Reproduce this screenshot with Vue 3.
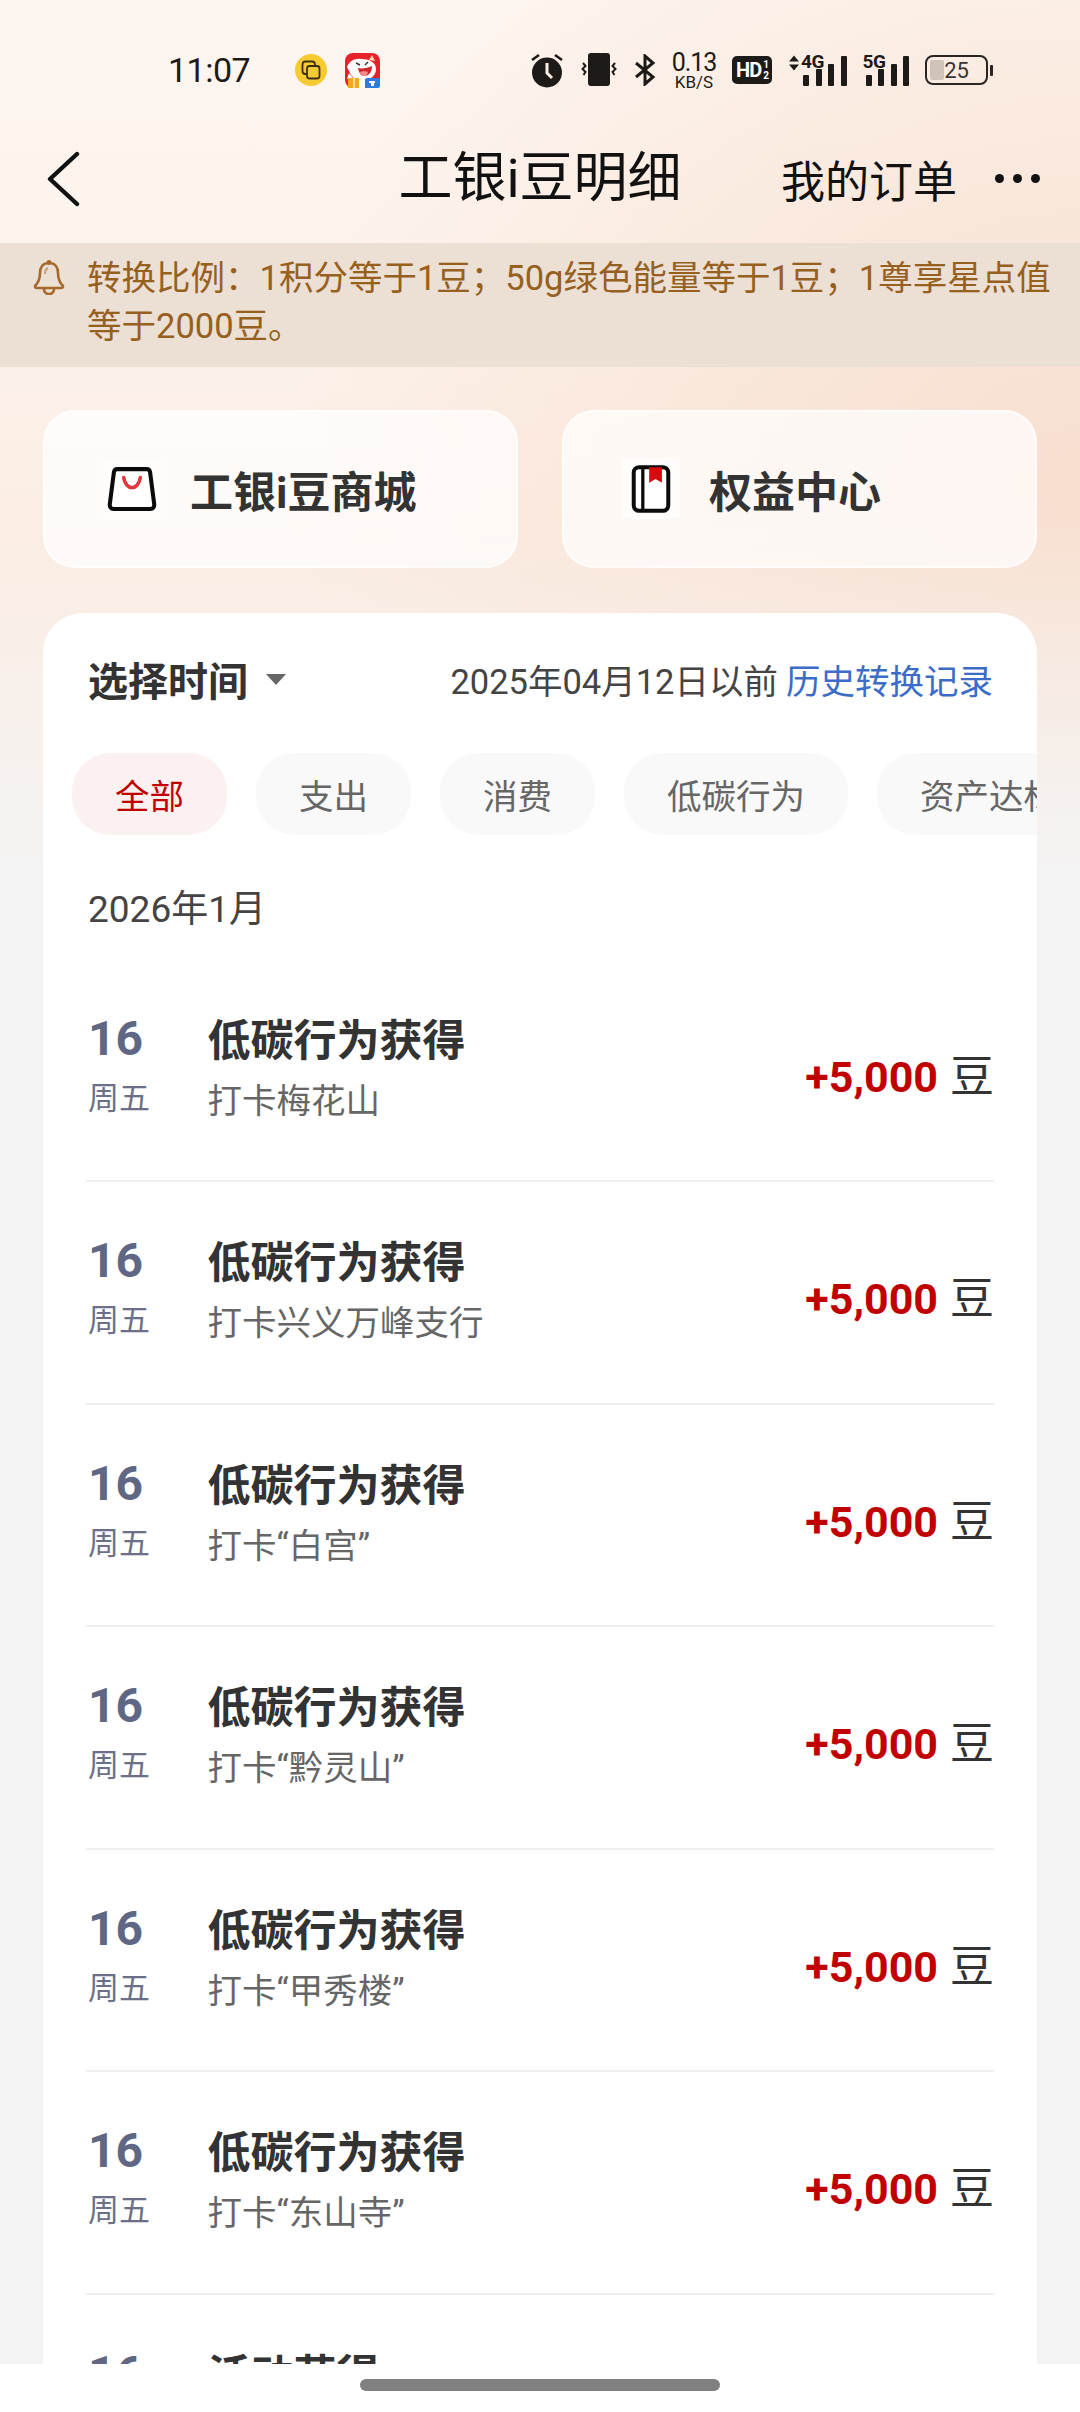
<template>
  <div class="page">
    <div class="status">
      <span class="time">11:07</span>
      <div class="app-icons">
        <svg width="32" height="32" viewBox="0 0 32 32">
          <circle cx="16" cy="16" r="16" fill="#f6cb32" />
          <rect x="7.500" y="7.500" width="12.500" height="12.500" rx="3" fill="none" stroke="#3a3115" stroke-width="1.800" />
          <rect x="12" y="12" width="12.500" height="12.500" rx="2.500" fill="#f6cb32" stroke="#3a3115" stroke-width="1.800" />
        </svg>
        <svg width="35" height="35" viewBox="0 0 35 35">
          <rect width="35" height="35" rx="8" fill="#e8202a" />
          <path d="M2 14c2-6 8-9 14-8 8 0 15 3 15 10 0 7-6 11-13 11-5 0-9-1-12-5L2 14z" fill="#fff" />
          <path d="M4 20l-2 6 6-1z" fill="#fff" />
          <path d="M27 2l3 6-6-1z" fill="#f4d9b0" />
          <path d="M13 15c4 1 10 0 14-2 0 6-3 10-8 10-3 0-5-3-6-8z" fill="#d5252c" />
          <path d="M15 19c2-1 6-1 8 0-1 3-2 4-4 4s-3-1-4-4z" fill="#f58a8a" />
          <path d="M11 10l4 2M23 9l-3 3" stroke="#333" stroke-width="1.500" />
          <rect x="3" y="25" width="11" height="10" fill="#f5a623" />
          <rect x="8" y="25" width="2" height="10" fill="#ffe08a" />
          <rect x="14" y="27" width="6" height="8" fill="#fff" />
          <rect x="20" y="25" width="15" height="10" rx="2" fill="#2f7be0" />
          <path d="M24 28h6v2h-6zM26 30h3v3h-3z" fill="#fff" />
        </svg>
      </div>
      <div class="sys-icons">
        <svg width="34" height="36" viewBox="0 0 34 36">
          <circle cx="17" cy="20.500" r="15" fill="#1d1a18" />
          <path d="M17 11v10l5 5" fill="none" stroke="#fbeee4" stroke-width="3" />
          <path d="M2 8l7-5M32 8l-7-5" stroke="#1d1a18" stroke-width="2.600" fill="none" />
        </svg>
        <svg width="38" height="34" viewBox="0 0 38 34">
          <rect x="8" y="0" width="22" height="33" rx="3" fill="#1d1a18" />
          <path d="M3 10l2.500 3-3 3 3 3-2 3M35 10l-2.500 3 3 3-3 3 2 3" fill="none" stroke="#1d1a18" stroke-width="2" />
        </svg>
        <svg width="22" height="32" viewBox="0 0 22 32">
          <path d="M2 9l17 14-8 7V2l8 7L2 23" fill="none" stroke="#1d1a18" stroke-width="3" />
        </svg>
        <div class="speed">
          <span class="speed-num">0.13</span>
          <span class="speed-unit">KB/S</span>
        </div>
        <div class="hd">HD<span class="hd-sub"><i>1</i><i>2</i></span></div>
        <div class="net-icon">
          <svg class="updown" width="12" height="16" viewBox="0 0 12 16">
            <path d="M1 6.500l5-6 5 6zM1 9.500l5 6 5-6z" fill="#1d1a18" />
          </svg>
          <span class="net-label">4G</span>
          <span class="bars"><i class="b1"></i><i class="b2"></i><i class="b3"></i><i class="b4"></i></span>
        </div>
        <div class="net-icon">
          <span class="net-label">5G</span>
          <span class="bars"><i class="b1"></i><i class="b2"></i><i class="b3"></i><i class="b4"></i></span>
        </div>
        <div class="battery">
          <div class="battery-body">
            <span class="battery-fill"></span>
            <span class="battery-num">25</span>
          </div>
          <span class="battery-tip"></span>
        </div>
      </div>
    </div>

    <div class="nav">
      <svg class="back" width="34" height="56" viewBox="0 0 34 56">
        <path d="M31 3L4 28l27 25" fill="none" stroke="#111" stroke-width="4.400" stroke-linecap="round" stroke-linejoin="round" />
      </svg>
      <div class="nav-title">工银i豆明细</div>
      <div class="nav-right">
        <span class="orders">我的订单</span>
        <span class="dots"><i></i><i></i><i></i></span>
      </div>
    </div>

    <div class="notice">
      <svg class="bell" width="34" height="36" viewBox="0 0 34 36">
        <path d="M17 4c-6 0-9 4-9 10 0 6-1 9-5 13 0 1 0 2 2 2h24c2 0 2-1 2-2-4-4-5-7-5-13 0-6-3-10-9-10z" fill="none" stroke="#a56a2c" stroke-width="2.600" stroke-linejoin="round" />
        <circle cx="17" cy="3.500" r="2.400" fill="#a56a2c" />
        <path d="M12 30c0 3 2 5 5 5s5-2 5-5" fill="none" stroke="#a56a2c" stroke-width="2.600" />
        <path d="M13 15c0-3 1-5 3-6" fill="none" stroke="#c9a27a" stroke-width="2" />
      </svg>
      <p class="notice-text">转换比例：1积分等于1豆；50g绿色能量等于1豆；1尊享星点值等于2000豆。</p>
    </div>

    <div class="entries">
      <div class="entry">
        <span class="entry-icon">
          <svg width="50" height="47" viewBox="0 0 54 50">
            <path d="M11 3h32c2 0 3 1 3.500 3L51 41c.3 3-1.500 5-4 5H7c-2.500 0-4.300-2-4-5L7.500 6C8 4 9 3 11 3z" fill="#fff" stroke="#0b0b0b" stroke-width="4.400" stroke-linejoin="round" />
            <path d="M18 12c1 7 5 11 9 11s8-4 9-11" fill="none" stroke="#e0383a" stroke-width="3.800" stroke-linecap="round" />
          </svg>
        </span>
        <span class="entry-label">工银i豆商城</span>
      </div>
      <div class="entry">
        <span class="entry-icon">
          <svg width="40" height="50" viewBox="0 0 44 54">
            <rect x="3" y="3" width="38" height="48" rx="6" fill="#fff" stroke="#0b0b0b" stroke-width="4.400" />
            <path d="M13 3v48" stroke="#0b0b0b" stroke-width="3.600" />
            <path d="M20 3h14v17l-7-4-7 4z" fill="#d9090f" />
          </svg>
        </span>
        <span class="entry-label">权益中心</span>
      </div>
    </div>

    <div class="panel">
      <div class="panel-head">
        <div class="picker">
          <span class="picker-label">选择时间</span>
          <span class="caret"></span>
        </div>
        <div class="history">
          <span>2025年04月12日以前</span>
          <span class="history-link">历史转换记录</span>
        </div>
      </div>

      <div class="tabs">
        <span v-for="(tab, i) in tabs" :key="tab" class="tab" :class="{ active: i === 0 }">{{ tab }}</span>
      </div>

      <div class="month">2026年1月</div>

      <div class="rows">
        <div v-for="(row, i) in rows" :key="i" class="row">
          <div class="row-date">
            <div class="row-day">{{ row.day }}</div>
            <div v-if="row.week" class="row-week">{{ row.week }}</div>
          </div>
          <div class="row-main">
            <div class="row-title">{{ row.title }}</div>
            <div v-if="row.sub" class="row-sub">{{ row.sub }}</div>
          </div>
          <div v-if="row.amount" class="row-amount">
            <span class="amount-num">{{ row.amount }}</span>
            <span class="amount-unit">豆</span>
          </div>
        </div>
      </div>
    </div>

    <div class="home-bar">
      <span class="home-pill"></span>
    </div>
  </div>
</template>

<script setup>
const tabs = ['全部', '支出', '消费', '低碳行为', '资产达标']

const places = ['打卡梅花山', '打卡兴义万峰支行', '打卡“白宫”', '打卡“黔灵山”', '打卡“甲秀楼”', '打卡“东山寺”']

const rows = places.map(sub => ({
  day: 16,
  week: '周五',
  title: '低碳行为获得',
  sub,
  amount: '+5,000'
}))

// cut off by the home bar, only the top of it shows
rows.push({ day: 16, title: '活动获得' })
</script>

<style scoped>
.page {
  position: relative;
  width: 1080px;
  height: 2412px;
  overflow: hidden;
  font-family: Roboto, "Noto Sans CJK SC", sans-serif;
  background:
    linear-gradient(180deg, rgba(244, 244, 244, 0) 520px, #f4f4f4 880px),
    radial-gradient(800px 700px at 1080px 480px, #f8dfd0 0%, rgba(248, 223, 208, 0) 100%),
    linear-gradient(180deg, #fdf5ef 0%, #fcf3ec 300px, #fbecE2 560px);
}

.status {
  display: flex;
  align-items: center;
  height: 140px;
  padding-left: 168px;
  box-sizing: border-box;
}

.time {
  width: 127px;
  font-size: 34px;
  letter-spacing: -0.5px;
  color: #1d1a18;
}

.app-icons {
  display: flex;
  align-items: center;
  gap: 18px;
  width: 235px;
}

.sys-icons {
  display: flex;
  align-items: center;
  gap: 16px;
}

.speed {
  display: flex;
  flex-direction: column;
  align-items: center;
  width: 44px;
  color: #1d1a18;
}

.speed-num {
  font-size: 25px;
  line-height: 25px;
  letter-spacing: -1px;
}

.speed-unit {
  font-size: 17px;
  line-height: 15px;
}

.hd {
  display: flex;
  align-items: center;
  justify-content: center;
  width: 40px;
  height: 28px;
  border-radius: 5px;
  background: #1d1a18;
  color: #fff;
  font-size: 20px;
  font-weight: 700;
  letter-spacing: -1px;
}

.hd-sub {
  display: flex;
  flex-direction: column;
  font-size: 10px;
  line-height: 11px;
  margin-left: 2px;
}

.hd-sub i {
  font-style: normal;
}

.net-icon {
  position: relative;
  display: flex;
  align-items: flex-end;
  height: 32px;
}

.updown {
  position: absolute;
  left: 0;
  top: 1px;
}

.net-icon .updown + .net-label {
  left: 13px;
}

.net-icon:has(.updown) {
  padding-left: 12px;
}

.net-label {
  position: absolute;
  left: 0;
  top: -2px;
  font-size: 19px;
  font-weight: 700;
  line-height: 19px;
  letter-spacing: -0.5px;
  color: #1d1a18;
}

.bars {
  display: flex;
  align-items: flex-end;
  gap: 6.500px;
  padding-left: 3px;
}

.bars i {
  width: 6px;
  border-radius: 1px;
  background: #1d1a18;
}

.bars .b1 {
  height: 11px;
}

.bars .b2 {
  height: 17px;
}

.bars .b3 {
  height: 22px;
}

.bars .b4 {
  height: 30px;
}

.battery {
  display: flex;
  align-items: center;
  gap: 2px;
}

.battery-body {
  position: relative;
  display: flex;
  align-items: center;
  justify-content: center;
  width: 63px;
  height: 30px;
  box-sizing: border-box;
  border: 2.500px solid #2a2523;
  border-radius: 8px;
}

.battery-fill {
  position: absolute;
  left: 3px;
  top: 3px;
  bottom: 3px;
  width: 14px;
  border-radius: 2px;
  background: #cfc3ba;
}

.battery-num {
  position: relative;
  font-size: 22px;
  color: #3a3432;
}

.battery-tip {
  width: 3px;
  height: 11px;
  border-radius: 1px;
  background: #2a2523;
}

.nav {
  display: grid;
  grid-template-columns: 1fr auto 1fr;
  align-items: center;
  height: 103px;
  padding: 0 40px 26px;
  box-sizing: border-box;
}

.back {
  display: block;
  margin-left: 6px;
}

.nav-title {
  font-size: 54px;
  color: #111;
  line-height: 70px;
}

.nav-right {
  display: flex;
  align-items: center;
  justify-content: flex-end;
  gap: 38px;
}

.orders {
  font-size: 44px;
  color: #111;
}

.dots {
  display: flex;
  gap: 9px;
}

.dots i {
  width: 9px;
  height: 9px;
  border-radius: 50%;
  background: #111;
}

.notice {
  display: flex;
  align-items: flex-start;
  height: 124px;
  padding: 11px 0 0 32px;
  box-sizing: border-box;
  background: #ecdfd4;
}

.bell {
  flex: none;
  margin: 5px 21px 0 0;
}

.notice-text {
  margin: 0;
  width: 990px;
  font-size: 34.500px;
  line-height: 48px;
  color: #96601f;
}

.entries {
  display: flex;
  gap: 44px;
  margin: 43px 43px 0;
}

.entry {
  flex: 1;
  display: flex;
  align-items: center;
  gap: 29px;
  height: 158px;
  padding-left: 58px;
  box-sizing: border-box;
  border: 2px solid rgba(255, 255, 255, 0.75);
  border-radius: 32px;
  background: rgba(255, 255, 255, 0.7);
}

.entry-icon {
  display: flex;
  align-items: center;
  justify-content: center;
  width: 58px;
  height: 60px;
  background: rgba(255, 255, 255, 0.6);
}

.entry-label {
  font-size: 43px;
  font-weight: 700;
  color: #333;
}

.panel {
  margin: 45px 43px 0;
  border-radius: 40px 40px 0 0;
  background: #fff;
}

.panel-head {
  display: flex;
  align-items: center;
  justify-content: space-between;
  height: 60px;
  padding: 36px 44px 0 45px;
}

.picker {
  display: flex;
  align-items: center;
  gap: 18px;
}

.picker-label {
  font-size: 40px;
  font-weight: 700;
  color: #333;
}

.caret {
  width: 0;
  height: 0;
  border-left: 10px solid transparent;
  border-right: 10px solid transparent;
  border-top: 11px solid #666;
}

.history {
  display: flex;
  gap: 8px;
  font-size: 34.500px;
  color: #444;
}

.history-link {
  color: #3a6cc8;
}

.tabs {
  display: flex;
  gap: 29px;
  margin-top: 44px;
  padding-left: 29px;
  overflow: hidden;
}

.tab {
  flex: none;
  display: flex;
  align-items: center;
  height: 82px;
  padding: 0 43px;
  border-radius: 38px;
  background: #f9f9f9;
  font-size: 34.500px;
  color: #666;
}

.tab.active {
  background: #fcf1f1;
  color: #c00000;
}

.month {
  margin-top: 50px;
  padding-left: 45px;
  font-size: 37px;
  line-height: 50px;
  color: #444;
}

.rows {
  margin: 24.500px 43px 0;
}

.row {
  display: flex;
  align-items: flex-start;
  height: 222.500px;
  box-sizing: border-box;
  border-bottom: 2px solid #eee;
}

.row-date {
  width: 121.500px;
  padding: 51px 0 0 2px;
  box-sizing: border-box;
}

.row-day {
  font-size: 48px;
  font-weight: 700;
  line-height: 56px;
  color: #5f6785;
}

.row-week {
  margin-top: 10px;
  font-size: 31px;
  line-height: 44px;
  color: #6b7088;
}

.row-main {
  flex: 1;
  padding-top: 51px;
}

.row-title {
  font-size: 43px;
  font-weight: 700;
  line-height: 60px;
  color: #333;
}

.row-sub {
  margin-top: 5px;
  font-size: 34.500px;
  line-height: 50px;
  color: #666;
}

.row-amount {
  display: flex;
  align-items: center;
  gap: 12px;
  padding-top: 87px;
}

.amount-num {
  font-size: 43px;
  font-weight: 700;
  line-height: 60px;
  color: #c00000;
}

.amount-unit {
  font-size: 44px;
  line-height: 60px;
  color: #333;
}

.home-bar {
  position: absolute;
  left: 0;
  right: 0;
  bottom: 0;
  display: flex;
  justify-content: center;
  height: 48px;
  background: #fff;
}

.home-pill {
  width: 360px;
  height: 12px;
  margin-top: 15px;
  border-radius: 6px;
  background: #808080;
}
</style>
